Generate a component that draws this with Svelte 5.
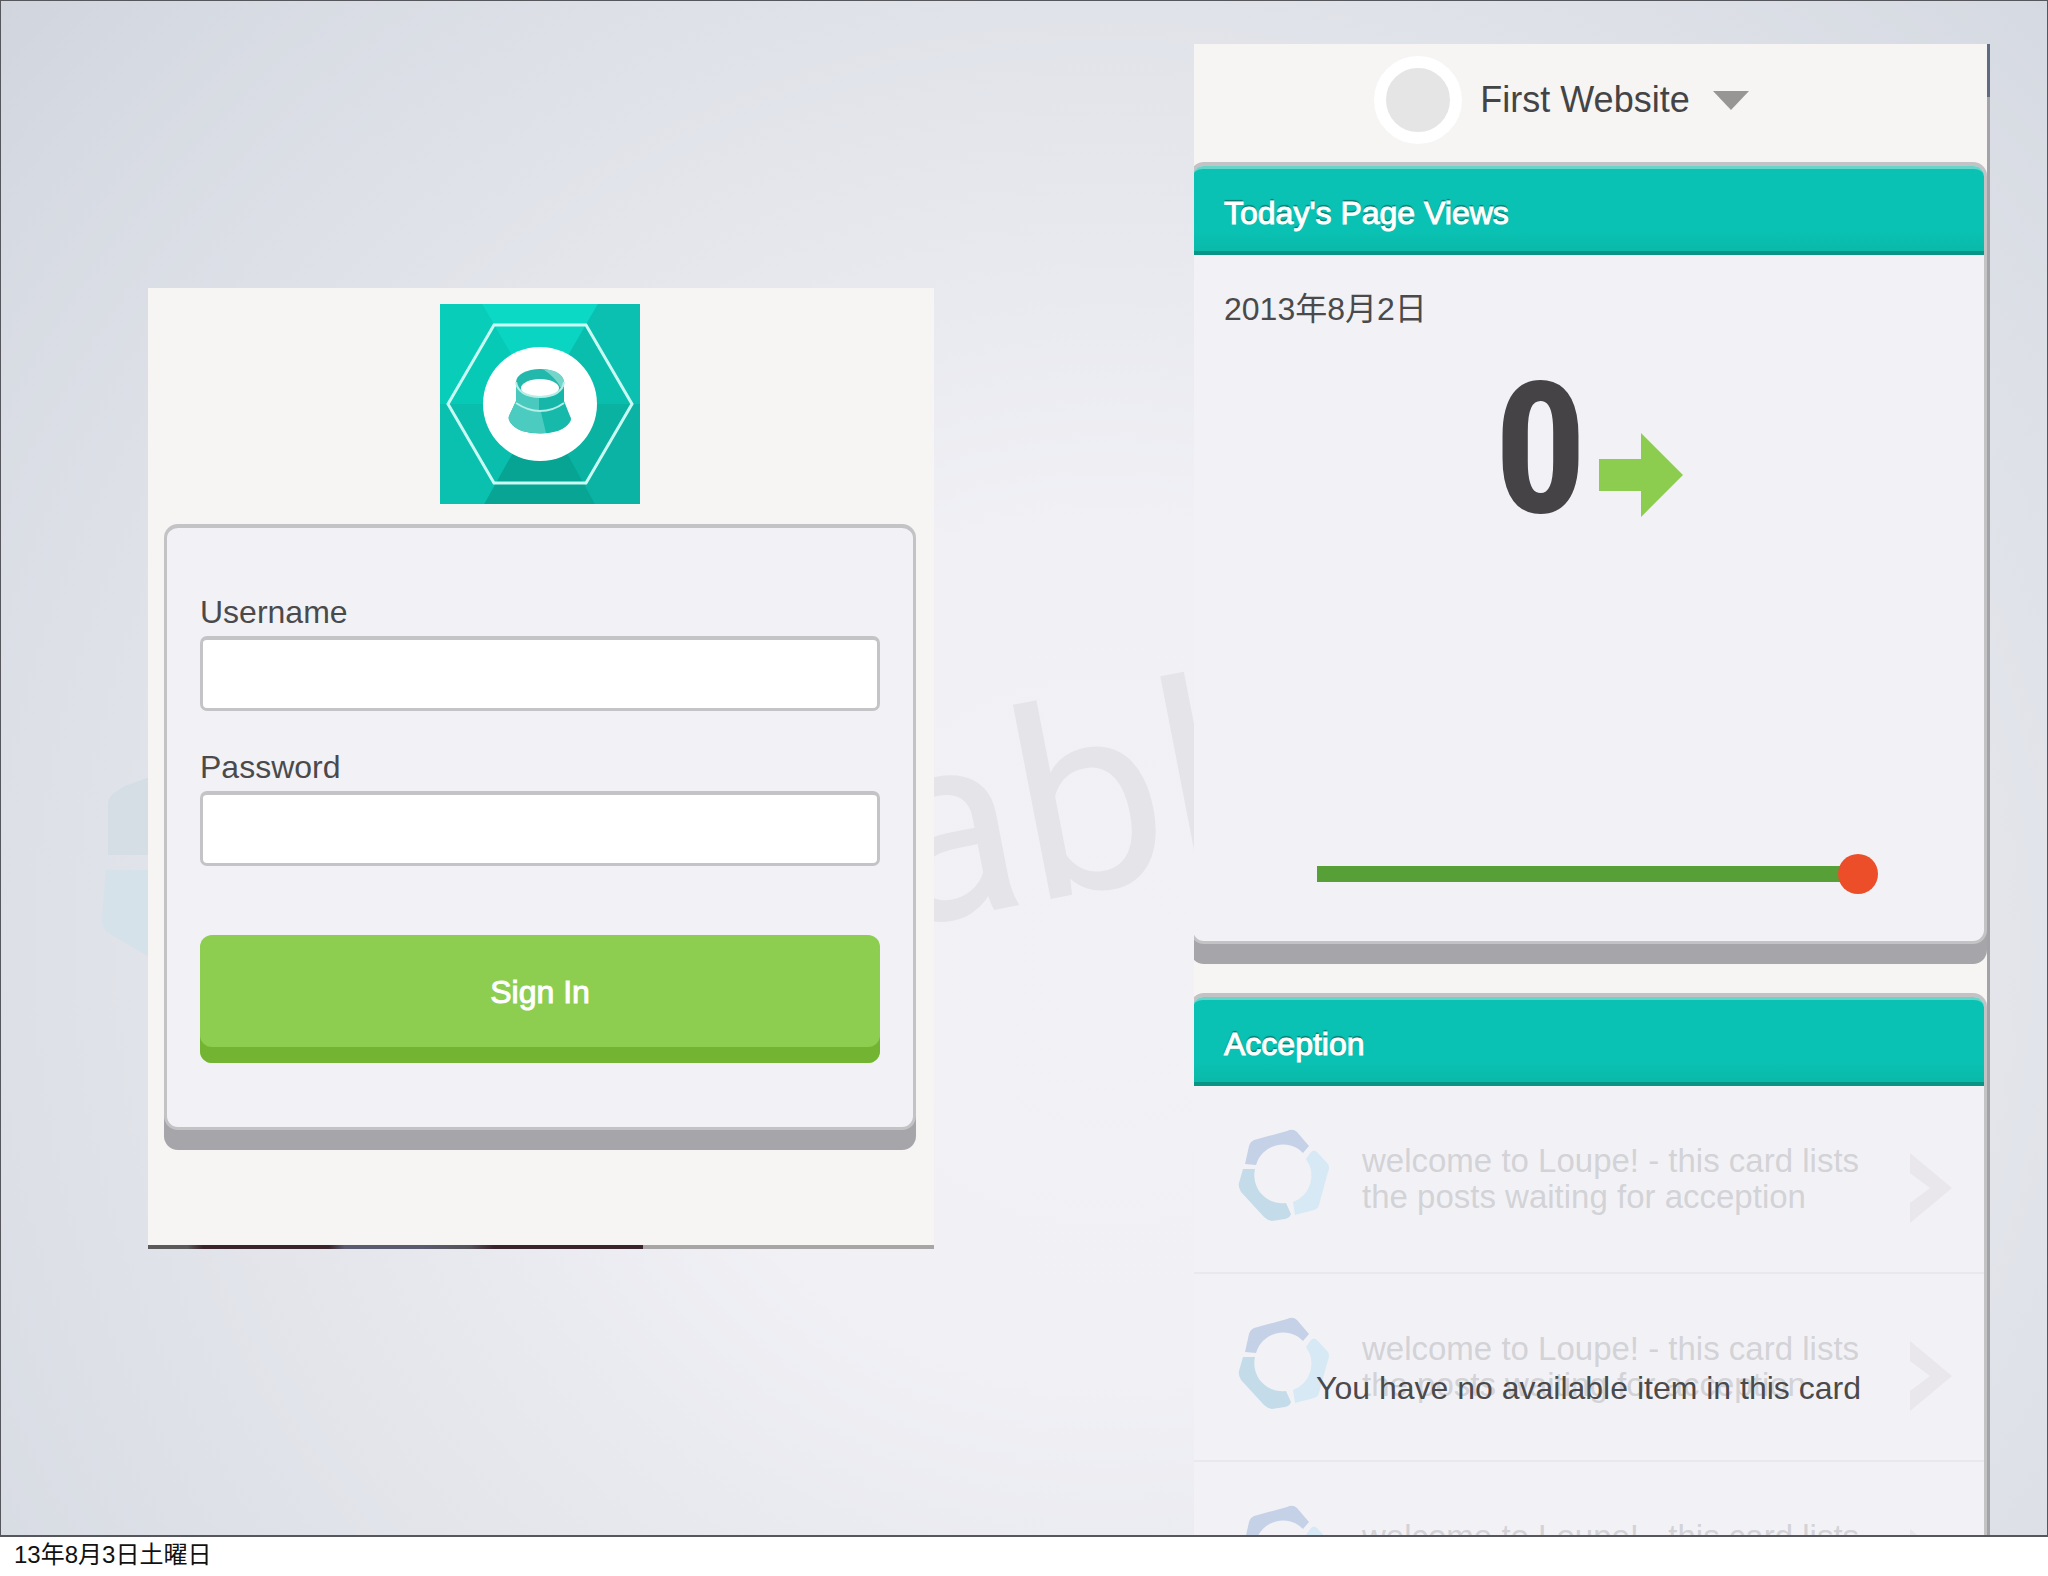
<script>
  let username = $state('');
  let password = $state('');
  let day = $state(30);

  const posts = [
    'welcome to Loupe! - this card lists the posts waiting for acception',
    'welcome to Loupe! - this card lists the posts waiting for acception',
    'welcome to Loupe! - this card lists the posts waiting for acception'
  ];
</script>

<div class="page">
  <main class="slide">
    <svg class="watermark" viewBox="0 0 2048 1536" preserveAspectRatio="xMidYMid slice" aria-hidden="true">
      <path class="mark-a" d="M107 855V806Q107 798 113 793L124 786L190 762V855Z" />
      <path class="mark-b" d="M105 870H190V975L148 957L107 933Q101 928 101 921Z" />
      <text transform="translate(892 930) rotate(-11)">abl</text>
    </svg>

    <section class="panel login" aria-label="Sign in">
      <div class="brand">
        <svg class="logo" viewBox="0 0 200 200" role="img" aria-label="Loupe">
          <rect width="200" height="200" fill="#08c6b5" />
          <path d="M0 0H42L100 100L0 100Z" fill="#07cdb9" />
          <path d="M42 0H158L100 100Z" fill="#0bd8c5" />
          <path d="M158 0H200V100H100Z" fill="#0bc0b0" />
          <path d="M200 100V200H155L100 100Z" fill="#0bb3a4" />
          <path d="M155 200H44L100 100Z" fill="#08a494" />
          <path d="M44 200H0V100H100Z" fill="#0ac0af" />
          <path d="M54 21H146L192 100L146 179H54L8 100Z" fill="#0a8f83" fill-opacity=".04" stroke="#c9fbf3" stroke-width="3" />
          <circle cx="100" cy="100" r="57" fill="#fff" />
          <path d="M76 97L69 112Q68 115 70 118Q74 124 82 127Q100 132 118 127Q126 124 130 118Q132 115 130 112L124 97Z" fill="#17b9ab" />
          <path d="M76 97L69 112Q68 115 70 118Q74 124 82 127Q93 130 106 129L99 100Z" fill="#4cccc0" />
          <path d="M76 77V100Q87 107 100 107Q113 107 124 100V77Z" fill="#4ac9be" />
          <path d="M99 85V107Q114 107 124 100V77Z" fill="#16b7a9" />
          <ellipse cx="100" cy="78" rx="24" ry="13" fill="#22b9ac" />
          <path d="M103 65Q122 66 124 78L121 84Q116 74 103 65Z" fill="#74d5cb" />
          <ellipse cx="100" cy="84" rx="19" ry="9" fill="#fff" />
          <path d="M76 78Q78 92 100 93Q122 92 124 78M76 99Q88 107 100 107Q113 107 124 99" fill="none" stroke="#b5eee7" stroke-width="2" />
        </svg>
      </div>
      <form class="card form-card" onsubmit={(e) => e.preventDefault()}>
        <div class="field">
          <label for="username">Username</label>
          <input id="username" type="text" autocomplete="username" bind:value={username} />
        </div>
        <div class="field">
          <label for="password">Password</label>
          <input id="password" type="password" autocomplete="current-password" bind:value={password} />
        </div>
        <button class="sign-in" type="submit">Sign In</button>
      </form>
      <div class="strip"></div>
    </section>

    <section class="panel dashboard" aria-label="Dashboard">
      <header class="site">
        <button class="site-switch" type="button">
          <span class="avatar"></span>
          <span>First Website</span>
          <svg class="caret" viewBox="0 0 36 19" aria-hidden="true"><path d="M0 0H36L18 19Z" fill="#979695" /></svg>
        </button>
      </header>

      <article class="card views">
        <h2>Today's Page Views</h2>
        <div class="views-body">
          <p class="date">2013年8月2日</p>
          <div class="figure">
            <span class="count">0</span>
            <svg class="arrow" viewBox="0 0 84 84" aria-hidden="true"><path d="M0 26H42V0L84 42L42 84V58H0Z" fill="#8ccd50" /></svg>
          </div>
          <input class="range" type="range" min="0" max="30" bind:value={day} aria-label="Day" />
        </div>
      </article>

      <article class="card acception">
        <h2>Acception</h2>
        <div class="list-wrap">
          <ul>
            {#each posts as post}
              <li>
                <svg class="post-icon" viewBox="8 8 94 94" aria-hidden="true">
                  <path d="M16 43L20 25Q21 21 25 19L58 10Q64 7 68 11L80 25L74 32A28 28 0 0 0 27 44Z" fill="#c5d1e6" />
                  <path d="M82 31Q85 28 88 31L99 43Q101 47 99 51L90 84Q89 88 85 89L66 94L64 81A28 28 0 0 0 77 38Z" fill="#d6e9f4" />
                  <path d="M14 48L26 48A28 28 0 0 0 57 82L62 93Q61 97 56 98L43 100Q38 99 35 96L12 71Q9 66 10 62Z" fill="#c4dce9" />
                </svg>
                <p>{post}</p>
                <svg class="chevron" viewBox="0 0 42 70" aria-hidden="true"><path d="M0 0L42 35L0 70V50L20 35L0 20Z" fill="#e9e7ec" /></svg>
              </li>
            {/each}
          </ul>
          <p class="empty">You have no available item in this card</p>
        </div>
      </article>
    </section>
  </main>
  <footer>13年8月3日土曜日</footer>
</div>

<style>
  :global(body) {
    background: #fff;
  }

  .page {
    display: flex;
    flex-direction: column;
    height: 100vh;
    font-family: 'Liberation Sans', 'Noto Sans CJK JP', sans-serif;
    font-size: 32px;
    line-height: 36px;
    color: #4a4a4c;
  }

  .page *,
  .page {
    box-sizing: border-box;
  }

  h2,
  p,
  ul {
    margin: 0;
    padding: 0;
    font-size: inherit;
    font-weight: normal;
  }

  .slide {
    position: relative;
    flex: 1;
    min-height: 0;
    display: grid;
    grid-template-columns: 786fr 796fr;
    column-gap: 260px;
    align-items: start;
    padding: 43px 57px 0 147px;
    overflow: hidden;
    border: 1px solid #55575c;
    border-bottom-width: 2px;
    background: radial-gradient(ellipse 62% 80% at 54% 62%, #f2f2f6 0%, #f0f0f5 35%, #e3e5eb 70%, #d6dae2 105%, #c6ccd6 140%);
  }

  .watermark {
    position: absolute;
    inset: 0;
    width: 100%;
    height: 100%;
  }

  .mark-a {
    fill: #d5dee5;
  }

  .mark-b {
    fill: #d5e2ea;
  }

  .watermark text {
    font-family: Roboto, sans-serif;
    font-size: 264px;
    fill: #e5e4e9;
  }

  .panel {
    position: relative;
    background: #f6f5f4;
  }

  .card {
    border: 3px solid #c3c3c6;
    border-top-width: 4px;
    border-radius: 14px;
    background: #f2f2f6;
    box-shadow: 0 20px 0 #a6a6aa;
  }

  .login {
    margin-top: 244px;
    padding: 16px 18px 0 16px;
  }

  .brand {
    display: flex;
    justify-content: center;
    height: 220px;
  }

  .logo {
    width: 200px;
    height: 200px;
  }

  .form-card {
    padding: 66px 33px 64px;
  }

  .field {
    display: flex;
    flex-direction: column;
    gap: 6px;
    margin-bottom: 38px;
  }

  .field input {
    width: 100%;
    height: 75px;
    padding: 0 16px;
    border: 3px solid #c4c4c7;
    border-top-width: 4px;
    border-radius: 7px;
    outline: none;
    background: #fff;
    color: inherit;
    font: inherit;
  }

  .sign-in {
    width: 100%;
    height: 128px;
    margin-top: 31px;
    padding: 0 0 14px;
    border: 0;
    border-radius: 12px;
    background: #8dce51;
    box-shadow: inset 0 -16px 0 #73b532;
    color: #fff;
    font: inherit;
    -webkit-text-stroke: 1px #fff;
  }

  .strip {
    height: 4px;
    margin: 115px -18px 0 -16px;
    background: linear-gradient(
      90deg,
      #5b5b5c 0 5%,
      #3b232b 7% 23%,
      #5a5a70 25% 35%,
      #555359 41%,
      #3b232b 44% 63%,
      #a8a5a7 63%
    );
  }

  .dashboard {
    overflow: hidden;
    border-right: 3px solid;
    border-image: linear-gradient(#5f6b80 54px, #a3a3a7 54px) 1;
  }

  .site {
    display: flex;
    justify-content: center;
    height: 118px;
    padding: 12px 58px 0 0;
  }

  .site-switch {
    display: flex;
    align-items: center;
    height: 88px;
    padding: 0;
    border: 0;
    background: none;
    color: #444446;
    font: inherit;
    font-size: 36px;
  }

  .avatar {
    width: 88px;
    height: 88px;
    margin-right: 18px;
    border: 12px solid #fff;
    border-radius: 50%;
    background: #e6e5e6;
  }

  .caret {
    width: 36px;
    height: 19px;
    margin-left: 23px;
  }

  .dashboard .card {
    margin: 0 0 49px -4px;
  }

  h2 {
    height: 89px;
    padding: 26px 31px 0;
    border-top: 3px solid #66d5ca;
    border-bottom: 4px solid #089585;
    border-radius: 10px 10px 0 0;
    background: linear-gradient(#0ac2b3 75%, #09b9a9);
    color: #fff;
    text-shadow: 0 -2px 1px #07776c;
    font-size: 32px;
    line-height: 36px;
    -webkit-text-stroke: 1px #fff;
  }

  .views-body {
    display: flex;
    flex-direction: column;
    padding: 36px 126px 47px 31px;
  }

  .figure {
    display: flex;
    justify-content: center;
    align-items: flex-end;
    gap: 12px;
    margin: 54px -95px 0 0;
  }

  .count {
    height: 136px;
    color: #454346;
    font-family: 'Roboto Condensed', 'Open Sans Condensed', 'Noto Sans CJK JP', sans-serif;
    font-feature-settings: 'hwid';
    font-size: 184px;
    font-weight: bold;
    line-height: 136px;
  }

  .arrow {
    width: 84px;
    height: 84px;
  }

  .range {
    appearance: none;
    height: 40px;
    margin: 337px -20px 0 93px;
    background: linear-gradient(#57a038, #57a038) 0 50% / calc(100% - 20px) 16px no-repeat;
  }

  .range::-webkit-slider-thumb {
    appearance: none;
    width: 40px;
    height: 40px;
    border-radius: 50%;
    background: #eb4e29;
  }

  .list-wrap {
    position: relative;
  }

  ul {
    list-style: none;
  }

  li {
    display: flex;
    align-items: flex-start;
    height: 188px;
    padding: 43px 32px 0 44px;
    border-bottom: 2px solid #e9e8ec;
  }

  .post-icon {
    flex: none;
    width: 94px;
    height: 94px;
  }

  li p {
    flex: 1;
    margin: 14px 0 0 31px;
    padding-right: 20px;
    color: #d3d3d7;
    font-size: 33px;
  }

  .chevron {
    flex: none;
    width: 42px;
    height: 70px;
    margin-top: 24px;
  }

  .empty {
    position: absolute;
    top: 284px;
    left: 0;
    right: 0;
    text-align: center;
  }

  footer {
    flex: none;
    height: 39px;
    padding: 0 14px;
    background: #fff;
    color: #111;
    font-size: 24px;
    line-height: 36px;
  }
</style>
